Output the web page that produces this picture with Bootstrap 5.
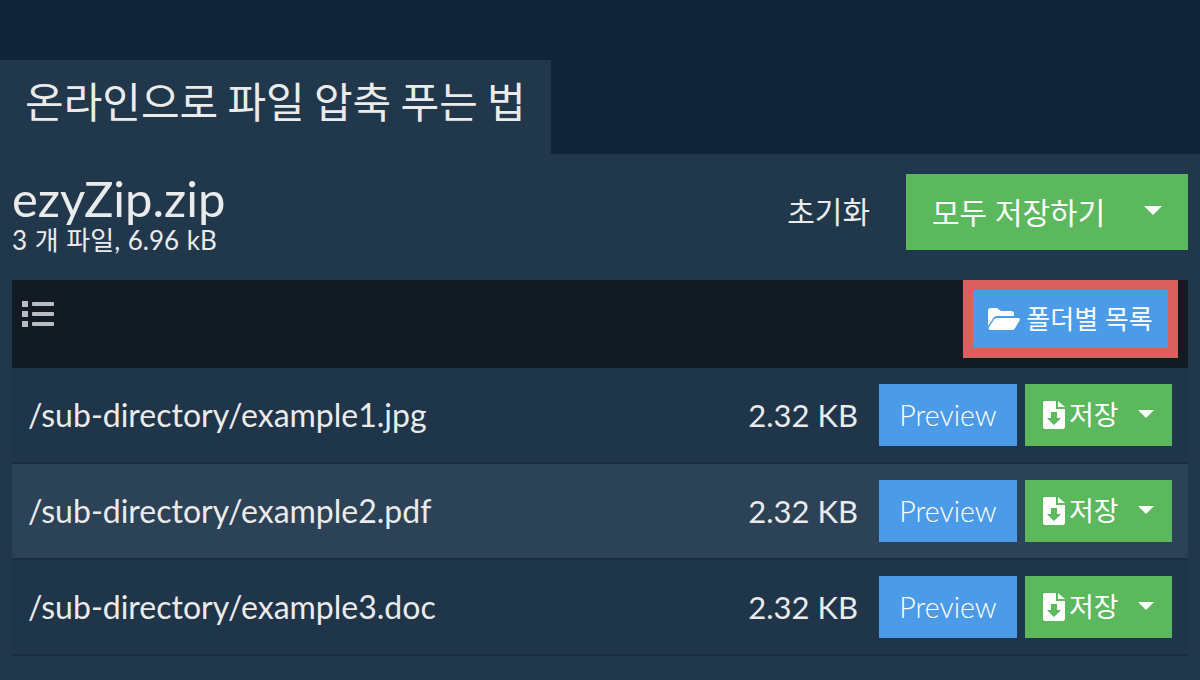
<!DOCTYPE html>
<html lang="ko">
<head>
<meta charset="utf-8">
<title>ezyZip</title>
<link href="https://cdn.jsdelivr.net/npm/bootstrap@5.3.0/dist/css/bootstrap.min.css" rel="stylesheet">
<style>
html,body{height:100%;}
body{background:#0f2537;color:#ebebeb;font-family:Lato,"Noto Sans CJK KR",sans-serif;overflow:hidden;}
.page-top{padding-top:60px;}
.tab-title{width:551px;height:94px;background:#20374c;padding:14px 0 0 25px;font-size:42px;line-height:56px;font-weight:400;margin:0;color:#ebebeb;word-spacing:-1.5px;}
.panel-main{background:#20374c;height:526px;padding:20px 12px 0;}
.head-row{height:106px;}
.file-title{font-size:49px;line-height:48px;margin:0;color:#ebebeb;font-weight:400;}
.file-sub{font-size:26px;line-height:36px;color:#ebebeb;word-spacing:1px;}
.reset-link{font-size:30px;color:#ebebeb;margin-right:36px;line-height:74px;text-decoration:none;}
.save-all{width:282px;height:76px;background:#5cb85c;color:#fff;font-size:30px;border:0;border-radius:0;padding:0 26px 0 26px;}
.save-all .caret-down{border-left-width:9px;border-right-width:9px;border-top-width:9px;margin-top:-3px;}
.caret-down{display:inline-block;border-left:8px solid transparent;border-right:8px solid transparent;border-top:8px solid #fff;}
.tool-bar{height:88px;background:#121a23;padding-right:10px;}
.list-ico{margin:20px 0 0 10px;width:32px;height:28px;}
.red-wrap{background:#d9605e;padding:10px;height:78px;width:215px;}
.folder-btn{width:195px;height:58px;background:#4c9be8;color:#fff;border:0;border-radius:0;font-size:26px;padding:0;gap:6px;}
.file-row{height:96px;padding:0 16px;border-bottom:2px solid #1a2c3e;background:#1f354a;}
.file-row.alt-row{background:#2c4257;}
.file-name{font-size:32px;color:#ebebeb;}
.file-size{font-size:31px;color:#ebebeb;margin-right:21px;}
.prev-btn{width:138px;height:62px;background:#4c9be8;color:#fff;border:0;border-radius:0;font-size:28.500px;font-weight:300;padding:0;margin-right:8px;}
.save-btn{width:147px;height:62px;background:#5cb85c;color:#fff;border:0;border-radius:0;font-size:27px;padding:0 18px 0 18px;}
.save-btn .caret-down{margin-top:-2px;}
.rows-box{margin-top:0;}
</style>
</head>
<body>
<div class="page-top">
  <h1 class="tab-title">온라인으로 파일 압축 푸는 법</h1>
  <div class="panel-main">
    <div class="head-row d-flex justify-content-between align-items-start">
      <div>
        <h2 class="file-title">ezyZip.zip</h2>
        <div class="file-sub">3 개 파일, 6.96 kB</div>
      </div>
      <div class="d-flex align-items-start">
        <a class="reset-link" href="#">초기화</a>
        <button class="btn save-all d-flex align-items-center justify-content-between" type="button"><span>모두 저장하기</span><span class="caret-down"></span></button>
      </div>
    </div>
    <div class="tool-bar d-flex justify-content-between align-items-start">
      <svg class="list-ico" viewBox="0 0 32 28" aria-hidden="true"><g fill="#b9bcc0"><rect x="0" y="1" width="6" height="6"/><rect x="0" y="11" width="6" height="6"/><rect x="0" y="21" width="6" height="6"/><rect x="10" y="2" width="22" height="4" rx="1"/><rect x="10" y="12" width="22" height="4" rx="1"/><rect x="10" y="22" width="22" height="4" rx="1"/></g></svg>
      <div class="red-wrap">
        <button class="btn folder-btn d-flex align-items-center justify-content-center" type="button">
          <svg width="32" height="22" viewBox="0 0 32 22" aria-hidden="true"><path fill="#fff" d="M0 18V3a3 3 0 0 1 3-3h6l4 3h10a3 3 0 0 1 3 3v2H9c-2 0-3 1-4 2.500z"/><path fill="#fff" d="M9 10h21c1.500 0 2.300 1 1.700 2.200l-4.700 8c-.6 1-1.500 1.800-3 1.800H2.500c-1.500 0-2.300-1-1.700-2.200l5-8C6.500 10.700 7.500 10 9 10z"/></svg>
          <span>폴더별 목록</span>
        </button>
      </div>
    </div>
    <div class="rows-box">
      <div class="file-row d-flex align-items-center">
        <span class="file-name flex-grow-1">/sub-directory/example1.jpg</span>
        <span class="file-size">2.32 KB</span>
        <button class="btn prev-btn" type="button">Preview</button>
        <button class="btn save-btn d-flex align-items-center justify-content-between" type="button">
          <span class="d-flex align-items-center gap-1"><svg width="22" height="28" viewBox="0 0 22 28" aria-hidden="true"><path fill="#fff" d="M2 0h11v8h9v18a2 2 0 0 1-2 2H2a2 2 0 0 1-2-2V2a2 2 0 0 1 2-2z"/><path fill="#fff" d="M15 0l7 6h-7z"/><path fill="#5cb85c" d="M8 11h6v6h4l-7 7-7-7h4z"/></svg><span>저장</span></span><span class="caret-down"></span>
        </button>
      </div>
      <div class="file-row alt-row d-flex align-items-center">
        <span class="file-name flex-grow-1">/sub-directory/example2.pdf</span>
        <span class="file-size">2.32 KB</span>
        <button class="btn prev-btn" type="button">Preview</button>
        <button class="btn save-btn d-flex align-items-center justify-content-between" type="button">
          <span class="d-flex align-items-center gap-1"><svg width="22" height="28" viewBox="0 0 22 28" aria-hidden="true"><path fill="#fff" d="M2 0h11v8h9v18a2 2 0 0 1-2 2H2a2 2 0 0 1-2-2V2a2 2 0 0 1 2-2z"/><path fill="#fff" d="M15 0l7 6h-7z"/><path fill="#5cb85c" d="M8 11h6v6h4l-7 7-7-7h4z"/></svg><span>저장</span></span><span class="caret-down"></span>
        </button>
      </div>
      <div class="file-row d-flex align-items-center">
        <span class="file-name flex-grow-1">/sub-directory/example3.doc</span>
        <span class="file-size">2.32 KB</span>
        <button class="btn prev-btn" type="button">Preview</button>
        <button class="btn save-btn d-flex align-items-center justify-content-between" type="button">
          <span class="d-flex align-items-center gap-1"><svg width="22" height="28" viewBox="0 0 22 28" aria-hidden="true"><path fill="#fff" d="M2 0h11v8h9v18a2 2 0 0 1-2 2H2a2 2 0 0 1-2-2V2a2 2 0 0 1 2-2z"/><path fill="#fff" d="M15 0l7 6h-7z"/><path fill="#5cb85c" d="M8 11h6v6h4l-7 7-7-7h4z"/></svg><span>저장</span></span><span class="caret-down"></span>
        </button>
      </div>
    </div>
  </div>
</div>
<script src="https://cdn.jsdelivr.net/npm/bootstrap@5.3.0/dist/js/bootstrap.bundle.min.js"></script>
</body>
</html>
